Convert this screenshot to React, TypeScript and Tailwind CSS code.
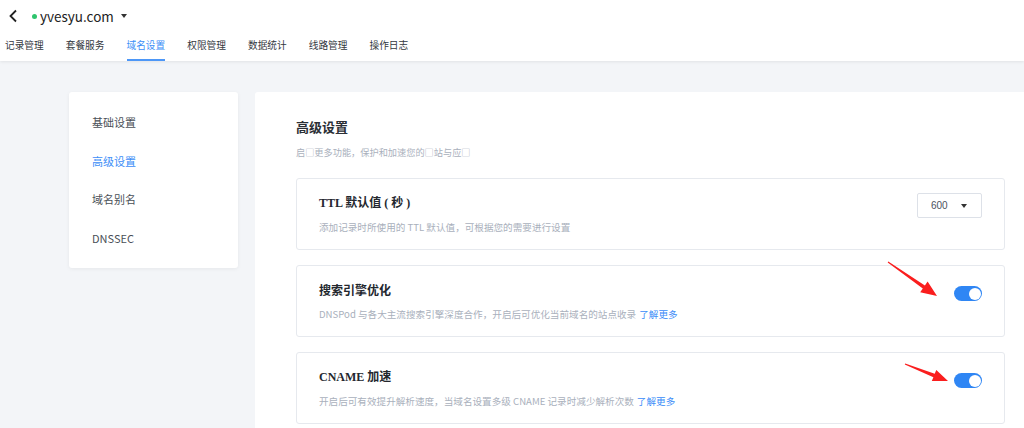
import React from "react";

const tabs = ["记录管理", "套餐服务", "域名设置", "权限管理", "数据统计", "线路管理", "操作日志"];
const sideItems = ["基础设置", "高级设置", "域名别名", "DNSSEC"];

function Toggle() {
  return (
    <div className="w-[28px] h-[15px] rounded-full bg-[#2f86f4] flex items-center justify-end pr-[1.5px]">
      <div className="w-[12px] h-[12px] rounded-full bg-white" />
    </div>
  );
}

function SettingCard({
  title,
  desc,
  link,
  right,
  serif,
}: {
  title: string;
  desc: string;
  link?: boolean;
  right: React.ReactNode;
  serif?: boolean;
}) {
  return (
    <div className="h-[72px] border border-[#e6e9ee] rounded-[3px] bg-white pl-[22px] pr-[22px] pt-[16px] flex justify-between items-start">
      <div>
        <div
          className={`text-[12px] leading-[16px] font-bold text-[#23272e] ${
            serif ? "font-['Liberation_Serif','Noto_Sans_CJK_SC',serif]" : ""
          }`}
        >
          {title}
        </div>
        <div className="mt-[9px] text-[9.6px] leading-[14px] text-[#a9b0bc]">
          {desc}
          {link && <span className="text-[#3a8cf8] ml-[3px]">了解更多</span>}
        </div>
      </div>
      {right}
    </div>
  );
}

export default function App() {
  return (
    <div className="relative w-[1024px] h-[428px] overflow-hidden bg-[#f3f5f8] font-['Noto_Sans_CJK_SC','Noto_Sans',sans-serif]">
      {/* header */}
      <div className="bg-white h-[61px] shadow-[0_1px_3px_rgba(0,0,0,0.08)] relative z-10">
        <div className="h-[32px] flex items-center pl-[8px]">
          <svg width="10" height="14" viewBox="0 0 10 14" className="text-[#222]">
            <path d="M8 1.5 L2.5 7 L8 12.5" fill="none" stroke="currentColor" strokeWidth="1.8" />
          </svg>
          <div className="ml-[14px] w-[5px] h-[5px] rounded-full bg-[#2ec46d]" />
          <span className="ml-[3px] text-[13.5px] text-[#222] leading-[18px]">yvesyu.com</span>
          <svg width="6" height="4" viewBox="0 0 6 4" className="ml-[7px] text-[#333]">
            <path d="M0 0 H6 L3 4 Z" fill="currentColor" />
          </svg>
        </div>
        <div className="flex pl-[5px] gap-[22px]">
          {tabs.map((t, i) => (
            <div key={t} className="flex flex-col items-center">
              <div
                className={`pt-[6px] pb-[7px] text-[9.7px] leading-[14px] ${
                  i === 2 ? "text-[#3d8ef7]" : "text-[#333840]"
                }`}
              >
                {t}
              </div>
              <div className={`h-[2px] w-full ${i === 2 ? "bg-[#4d97f7]" : "bg-transparent"}`} />
            </div>
          ))}
        </div>
      </div>

      {/* body */}
      <div className="flex pt-[31px] pl-[69px] gap-[17px]">
        <div className="w-[169px] h-[176px] shrink-0 bg-white rounded-[3px] shadow-[0_1px_4px_rgba(0,0,0,0.06)] pt-[11px] pl-[23px]">
          {sideItems.map((s, i) => (
            <div
              key={s}
              className={`h-[38.5px] flex items-center text-[11px] ${
                i === 1 ? "text-[#3d8ef7]" : "text-[#4a4f57]"
              }`}
            >
              {s}
            </div>
          ))}
        </div>

        <div className="w-[791px] h-[400px] shrink-0 bg-white rounded-[3px] pt-[25px] px-[41px]">
          <div className="text-[13px] leading-[20px] font-bold text-[#2b2f36]">高级设置</div>
          <div className="mt-[8px] text-[9.2px] leading-[14px] text-[#a9b0bc]">
            启□更多功能，保护和加速您的□站与应□
          </div>

          <div className="mt-[19px] flex flex-col gap-[15px]">
            <SettingCard
              serif
              title="TTL 默认值 ( 秒 )"
              desc="添加记录时所使用的 TTL 默认值，可根据您的需要进行设置"
              right={
                <div className="-mt-[2px] w-[65px] h-[25px] border border-[#dde1e8] rounded-[2px] flex items-center pl-[13px] pr-[14px] justify-between">
                  <span className="text-[10px] text-[#4b5260] font-['Liberation_Sans',sans-serif]">600</span>
                  <svg width="6" height="4" viewBox="0 0 6 4" className="text-[#333]">
                    <path d="M0 0 H6 L3 4 Z" fill="currentColor" />
                  </svg>
                </div>
              }
            />
            <SettingCard
              title="搜索引擎优化"
              desc="DNSPod 与各大主流搜索引擎深度合作，开启后可优化当前域名的站点收录"
              link
              right={
                <div className="mt-[4px]">
                  <Toggle />
                </div>
              }
            />
            <SettingCard
              serif
              title="CNAME 加速"
              desc="开启后可有效提升解析速度，当域名设置多级 CNAME 记录时减少解析次数"
              link
              right={
                <div className="mt-[4px]">
                  <Toggle />
                </div>
              }
            />
          </div>
        </div>
      </div>

      {/* annotation arrows */}
      <svg
        className="absolute inset-0 pointer-events-none z-20"
        width="1024"
        height="428"
        viewBox="0 0 1024 428"
      >
        <polygon
          fill="#fa1e1e"
          points="887.7,262.4 922.8,288.4 920.2,292.2 937,296 927.6,281.5 924.9,285.4 888.3,261.6"
        />
        <polygon
          fill="#fa1e1e"
          points="904.8,364.5 933.4,377.2 931.8,381.1 948,381 936.3,369.9 934.7,373.8 905.2,363.5"
        />
      </svg>
    </div>
  );
}
